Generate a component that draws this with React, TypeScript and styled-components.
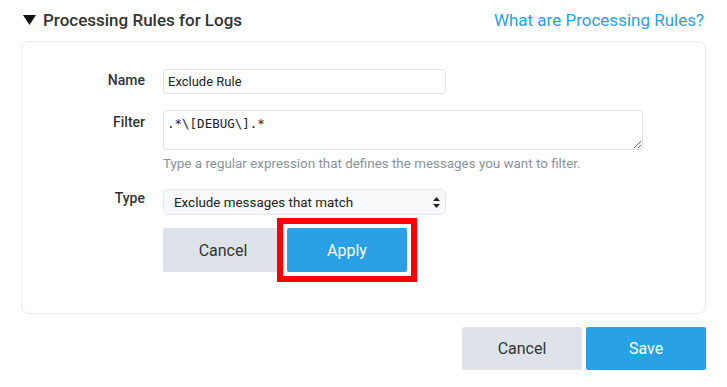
import React, { useState } from 'react';
import styled, { createGlobalStyle } from 'styled-components';

const GlobalStyle = createGlobalStyle`
  body {
    margin: 0;
    background: #ffffff;
    font-family: Roboto, "Liberation Sans", Arial, sans-serif;
    color: #333;
  }
`;

const Page = styled.div`
  width: 727px;
  padding-top: 9px;
`;

const Header = styled.div`
  display: flex;
  align-items: center;
  justify-content: space-between;
  padding: 0 23px;
  height: 22px;
  margin-bottom: 10px;
`;

const Title = styled.div`
  display: flex;
  align-items: center;
  gap: 7px;
  font-size: 17px;
  font-weight: 500;
  color: #333;
`;

const Link = styled.a`
  font-size: 17px;
  color: #2b9fe0;
  text-decoration: none;
  cursor: pointer;
`;

const Card = styled.div`
  margin: 0 21px;
  border: 1px solid #e8eaed;
  border-radius: 8px;
  padding: 27px 0 41px;
`;

const Form = styled.div`
  display: grid;
  grid-template-columns: 123px 1fr;
  column-gap: 18px;
  row-gap: 16px;
  align-items: start;
`;

const Label = styled.label<{ $offset: number }>`
  text-align: right;
  font-size: 14px;
  font-weight: 500;
  color: #333;
  padding-top: ${({ $offset }) => $offset}px;
`;

const Field = styled.div`
  display: flex;
  flex-direction: column;
`;

const TextInput = styled.input`
  box-sizing: border-box;
  width: 283px;
  height: 25px;
  border: 1px solid #dfe3e8;
  border-radius: 3px;
  padding: 0 4px;
  font-family: Roboto, "Liberation Sans", Arial, sans-serif;
  font-size: 13px;
  color: #222;
  outline: none;
`;

const TextArea = styled.textarea`
  box-sizing: border-box;
  width: 480px;
  height: 40px;
  border: 1px solid #dfe3e8;
  border-radius: 3px;
  padding: 5px 3px;
  font-family: "DejaVu Sans Mono", "Liberation Mono", monospace;
  font-size: 12.5px;
  color: #222;
  outline: none;
  display: block;
`;

const Help = styled.div`
  margin-top: 6px;
  font-size: 13.4px;
  color: #8b9199;
`;

const SelectWrap = styled.div`
  position: relative;
  width: 283px;
  margin-top: 2px;
`;

const Select = styled.select`
  box-sizing: border-box;
  appearance: none;
  width: 100%;
  height: 26px;
  border: 1px solid #e3e6ea;
  border-radius: 5px;
  background: #f8f9fa;
  padding: 0 20px 0 10px;
  font-family: Roboto, "Liberation Sans", Arial, sans-serif;
  font-size: 13.4px;
  color: #222;
  outline: none;
`;

const SelectArrows = styled.svg`
  position: absolute;
  right: 6px;
  top: 8px;
  pointer-events: none;
`;

const Buttons = styled.div`
  display: flex;
  gap: 4px;
  margin-top: -3px;
`;

const BottomBar = styled.div`
  display: flex;
  justify-content: flex-end;
  gap: 4px;
  padding: 13px 21px 0;
`;

const Button = styled.button<{ $primary?: boolean; $highlight?: boolean; $h?: number }>`
  position: relative;
  width: 120px;
  height: ${({ $h }) => $h ?? 44}px;
  border: none;
  border-radius: 2px;
  font-family: Roboto, "Liberation Sans", Arial, sans-serif;
  font-size: 16px;
  cursor: pointer;
  background: ${({ $primary }) => ($primary ? '#2aa1e4' : '#dde3e9')};
  color: ${({ $primary }) => ($primary ? '#ffffff' : '#333333')};
  outline: none;

  &::after {
    content: '';
    display: ${({ $highlight }) => ($highlight ? 'block' : 'none')};
    position: absolute;
    inset: -10px;
    border: 6px solid #ff0000;
    pointer-events: none;
  }
`;

export default function App() {
  const [name, setName] = useState('Exclude Rule');
  const [filter, setFilter] = useState('.*\\[DEBUG\\].*');
  const [type, setType] = useState('exclude');

  return (
    <Page>
      <GlobalStyle />
      <Header>
        <Title>
          <svg width="13" height="10" viewBox="0 0 13 10">
            <polygon points="0,0 13,0 6.5,10" fill="#111" />
          </svg>
          Processing Rules for Logs
        </Title>
        <Link>What are Processing Rules?</Link>
      </Header>

      <Card>
        <Form>
          <Label $offset={3}>Name</Label>
          <Field>
            <TextInput value={name} onChange={(e) => setName(e.target.value)} />
          </Field>

          <Label $offset={4}>Filter</Label>
          <Field>
            <TextArea value={filter} onChange={(e) => setFilter(e.target.value)} />
            <Help>Type a regular expression that defines the messages you want to filter.</Help>
          </Field>

          <Label $offset={3}>Type</Label>
          <Field>
            <SelectWrap>
              <Select value={type} onChange={(e) => setType(e.target.value)}>
                <option value="exclude">Exclude messages that match</option>
                <option value="include">Include messages that match</option>
              </Select>
              <SelectArrows width="7" height="11" viewBox="0 0 7 11">
                <polygon points="3.5,0 7,4 0,4" fill="#222" />
                <polygon points="0,7 7,7 3.5,11" fill="#222" />
              </SelectArrows>
            </SelectWrap>
          </Field>

          <div />
          <Buttons>
            <Button>Cancel</Button>
            <Button $primary $highlight>Apply</Button>
          </Buttons>
        </Form>
      </Card>

      <BottomBar>
        <Button $h={43}>Cancel</Button>
        <Button $primary $h={43}>Save</Button>
      </BottomBar>
    </Page>
  );
}
